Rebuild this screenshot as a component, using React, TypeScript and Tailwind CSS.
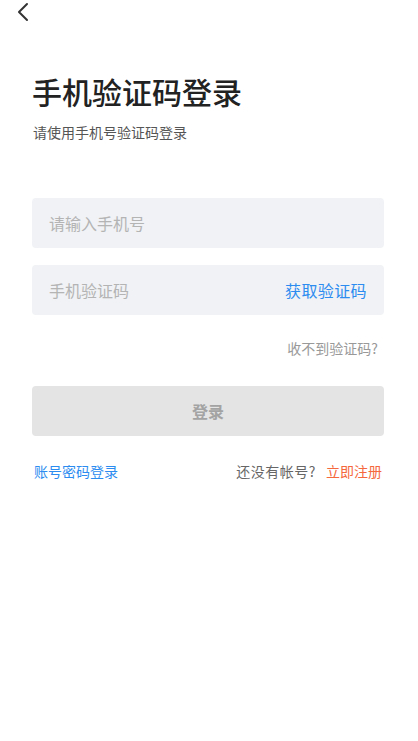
const font = "font-['Noto_Sans_CJK_SC','Noto_Sans',sans-serif]";

export default function App() {
    return (
        <div className={`${font} w-[418px] h-[741px] bg-white relative`}>
            {/* Top bar */}
            <div className="h-[24px] pl-[16px] flex items-center">
                <svg width="14" height="20" viewBox="0 0 14 20" fill="none">
                    <path d="M11 2 L3 10 L11 18" stroke="#333" strokeWidth="2" strokeLinecap="round" strokeLinejoin="round" />
                </svg>
            </div>

            <div className="pl-[32px] pr-[34px]">
                {/* Heading */}
                <h1 className="mt-[49px] text-[30px] leading-[36px] font-medium text-[#222]">手机验证码登录</h1>
                <p className="mt-[13px] text-[14px] leading-[20px] text-[#555] pl-[1px]">请使用手机号验证码登录</p>

                {/* Form */}
                <div className="mt-[56px] h-[50px] rounded-[4px] bg-[#f0f2f5] flex items-center px-[17px]">
                    <span className="text-[16px] text-[#b4b4b4]">请输入手机号</span>
                </div>
                <div className="mt-[17px] h-[50px] rounded-[4px] bg-[#f0f2f5] flex items-center justify-between pl-[17px] pr-[17px]">
                    <span className="text-[16px] text-[#b4b4b4]">手机验证码</span>
                    <span className="text-[16px] tracking-[0.4px] text-[#2d8cf0]">获取验证码</span>
                </div>
                <div className="mt-[23px] flex justify-end pr-[6px]">
                    <span className="text-[14px] leading-[20px] text-[#999]">收不到验证码?</span>
                </div>

                <div className="mt-[28px] h-[50px] rounded-[4px] bg-[#e4e4e4] flex items-center justify-center">
                    <span className="text-[16px] font-bold text-[#a3a3a3]">登录</span>
                </div>

                {/* Bottom links */}
                <div className="mt-[25px] flex items-center justify-between pl-[2px] pr-[2px]">
                    <span className="text-[14px] leading-[20px] text-[#2d8cf0]">账号密码登录</span>
                    <div className="flex items-center gap-[10px]">
                        <span className="text-[14px] leading-[20px] tracking-[0.5px] text-[#666]">还没有帐号?</span>
                        <span className="text-[14px] leading-[20px] text-[#f5673d]">立即注册</span>
                    </div>
                </div>
            </div>
        </div>
    );
}
